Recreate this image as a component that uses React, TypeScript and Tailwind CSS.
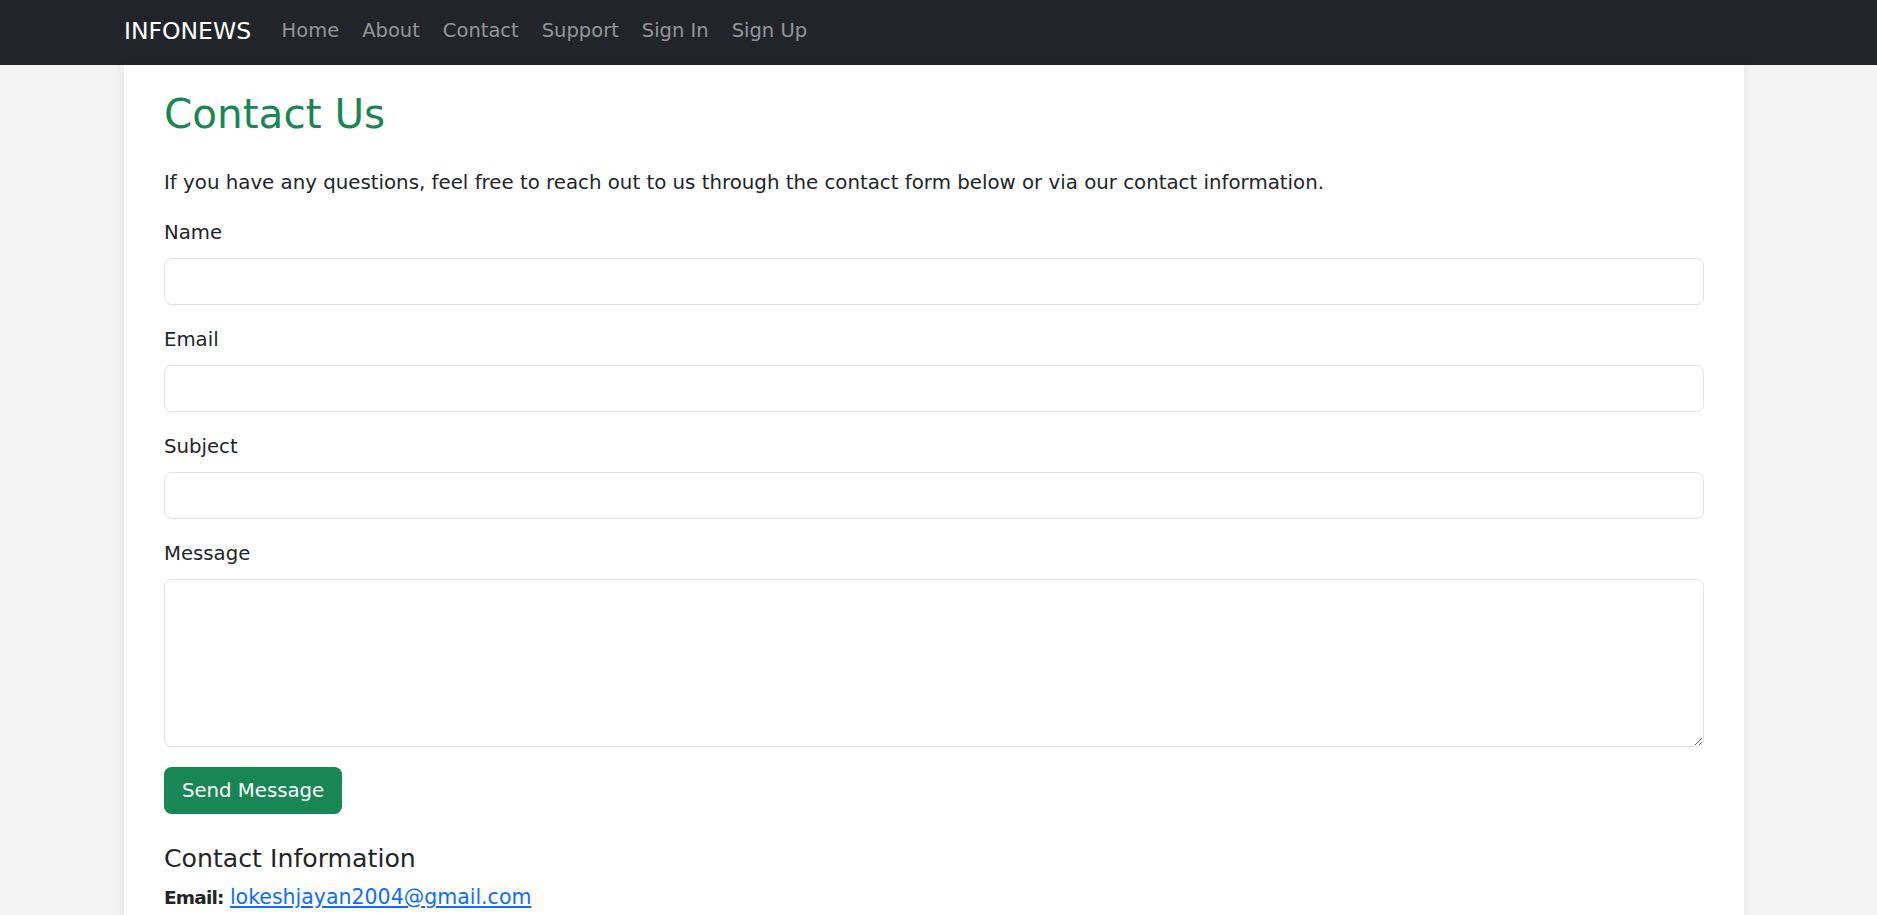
import React from "react";

export default function App() {
  const font = { fontFamily: '"DejaVu Sans", "Noto Sans", sans-serif' };
  return (
    <div className="min-h-screen bg-[#f4f4f4] text-[#212529]" style={font}>
      <nav className="h-[65px] bg-[#212529] flex items-center pb-[3px]">
        <div className="w-[1620px] ml-[124px] flex items-center">
          <a className="text-white text-[23.5px] leading-[30px] mr-[19px]" href="#">INFONEWS</a>
          <ul className="flex items-center">
            {["Home", "About", "Contact", "Support", "Sign In", "Sign Up"].map((l) => (
              <li key={l}>
                <a href="#" className="block px-[11.5px] text-[19.5px] leading-[30px] text-[#94969a]">{l}</a>
              </li>
            ))}
          </ul>
        </div>
      </nav>
      <div className="w-[1620px] ml-[124px] bg-white shadow-[0_0_10px_rgba(0,0,0,0.08)] px-[40px] pt-[24px] pb-[40px]">
        <h1 className="text-[40.5px] leading-[50px] text-[#198754] mb-[29px]">Contact Us</h1>
        <p className="text-[19.8px] leading-[30px] mb-[20px]">
          If you have any questions, feel free to reach out to us through the contact form below or via our contact information.
        </p>
        <form onSubmit={(e) => e.preventDefault()}>
          {["Name", "Email", "Subject"].map((f) => (
            <div key={f} className="mb-[20px]">
              <label className="block text-[19.7px] leading-[30px] mb-[10px]">{f}</label>
              <input className="block w-full h-[47px] border border-[#dee2e6] rounded-[7.5px] px-[15px] text-[20px] outline-none" type="text" />
            </div>
          ))}
          <div className="mb-[20px]">
            <label className="block text-[19.7px] leading-[30px] mb-[10px]">Message</label>
            <textarea className="block w-full h-[168px] border border-[#dee2e6] rounded-[7.5px] px-[15px] py-[7px] text-[20px] outline-none resize-y" />
          </div>
          <button type="submit" className="h-[47px] px-[18px] bg-[#198754] text-white text-[19.7px] leading-[30px] rounded-[7.5px]">
            Send Message
          </button>
        </form>
        <h4 className="text-[25.2px] leading-[30px] mt-[30px] mb-[8px]">Contact Information</h4>
        <p className="text-[19.5px] leading-[30px]">
          <strong className="font-bold text-[18.5px] tracking-[-0.8px]">Email:</strong>{" "}
          <a href="#" className="text-[#0d6efd] underline text-[20.5px]">lokeshjayan2004@gmail.com</a>
        </p>
      </div>
    </div>
  );
}
